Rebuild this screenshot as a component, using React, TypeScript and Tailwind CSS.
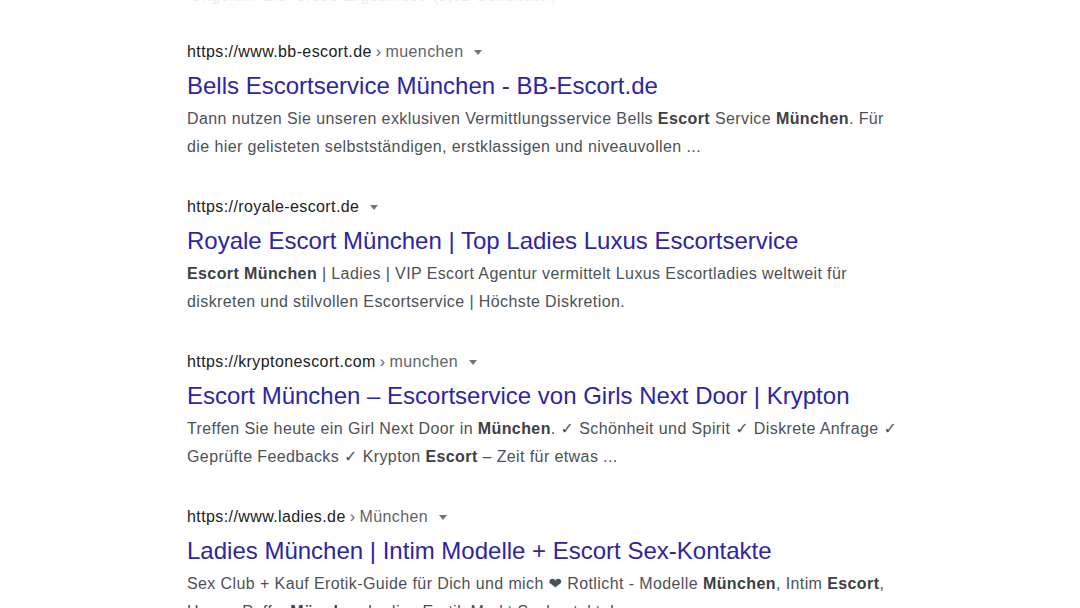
import React from 'react';

type Part = string | { b: string };

const results: {
  host: string;
  crumb?: string;
  title: string;
  lines: Part[][];
}[] = [
  {
    host: 'https://www.bb-escort.de',
    crumb: 'muenchen',
    title: 'Bells Escortservice München - BB-Escort.de',
    lines: [
      [
        'Dann nutzen Sie unseren exklusiven Vermittlungsservice Bells ',
        { b: 'Escort' },
        ' Service ',
        { b: 'München' },
        '. Für',
      ],
      ['die hier gelisteten selbstständigen, erstklassigen und niveauvollen ...'],
    ],
  },
  {
    host: 'https://royale-escort.de',
    title: 'Royale Escort München | Top Ladies Luxus Escortservice',
    lines: [
      [
        { b: 'Escort München' },
        ' | Ladies | VIP Escort Agentur vermittelt Luxus Escortladies weltweit für',
      ],
      ['diskreten und stilvollen Escortservice | Höchste Diskretion.'],
    ],
  },
  {
    host: 'https://kryptonescort.com',
    crumb: 'munchen',
    title: 'Escort München – Escortservice von Girls Next Door | Krypton',
    lines: [
      [
        'Treffen Sie heute ein Girl Next Door in ',
        { b: 'München' },
        '. ✓ Schönheit und Spirit ✓ Diskrete Anfrage ✓',
      ],
      ['Geprüfte Feedbacks ✓ Krypton ', { b: 'Escort' }, ' – Zeit für etwas ...'],
    ],
  },
  {
    host: 'https://www.ladies.de',
    crumb: 'München',
    title: 'Ladies München | Intim Modelle + Escort Sex-Kontakte',
    lines: [
      [
        'Sex Club + Kauf Erotik-Guide für Dich und mich ❤ Rotlicht - Modelle ',
        { b: 'München' },
        ', Intim ',
        { b: 'Escort' },
        ',',
      ],
      ['Huren, Puffs, ', { b: 'München' }, ' Ladies Erotik Markt Sexkontakte!'],
    ],
  },
];

function Caret() {
  return (
    <svg width="8" height="5" viewBox="0 0 8 5" className="ml-[11px] mt-[1px]">
      <path d="M0 0 L8 0 L4 5 Z" fill="#70757a" />
    </svg>
  );
}

export default function App() {
  return (
    <div
      className="h-[608px] w-[1080px] overflow-hidden bg-white"
      style={{ fontFamily: '"Liberation Sans", Arial, "DejaVu Sans", sans-serif' }}
    >
      {/* faint line cut off at the top edge */}
      <div className="h-[40px] overflow-hidden pl-[190px]">
        <div className="-mt-[14px] text-[16px] leading-[20px] tracking-[0.4px] text-[#ededed]">
          Ungefähr 2.340.000 Ergebnisse (0,52 Sekunden)
        </div>
      </div>

      <div className="flex flex-col pl-[187px]">
        {results.map((r) => (
          <div key={r.host} className="mb-[34px]">
            <div className="flex h-[24px] items-center text-[16px] tracking-[0.4px] text-[#202124]">
              <span>{r.host}</span>
              {r.crumb && (
                <span className="text-[#5f6368]">
                  <span className="mx-[4px]">›</span>
                  {r.crumb}
                </span>
              )}
              <Caret />
            </div>
            <div className="mt-[6px] h-[32px] whitespace-nowrap text-[24px] leading-[32px] text-[#2e25a3]">
              {r.title}
            </div>
            <div className="mt-[3px] text-[16px] leading-[28px] tracking-[0.4px] text-[#4d5156]">
              {r.lines.map((line, i) => (
                <div key={i} className="whitespace-nowrap">
                  {line.map((p, j) =>
                    typeof p === 'string' ? (
                      <span key={j}>{p}</span>
                    ) : (
                      <span key={j} className="font-bold text-[#3c4043]">
                        {p.b}
                      </span>
                    ),
                  )}
                </div>
              ))}
            </div>
          </div>
        ))}
      </div>
    </div>
  );
}
